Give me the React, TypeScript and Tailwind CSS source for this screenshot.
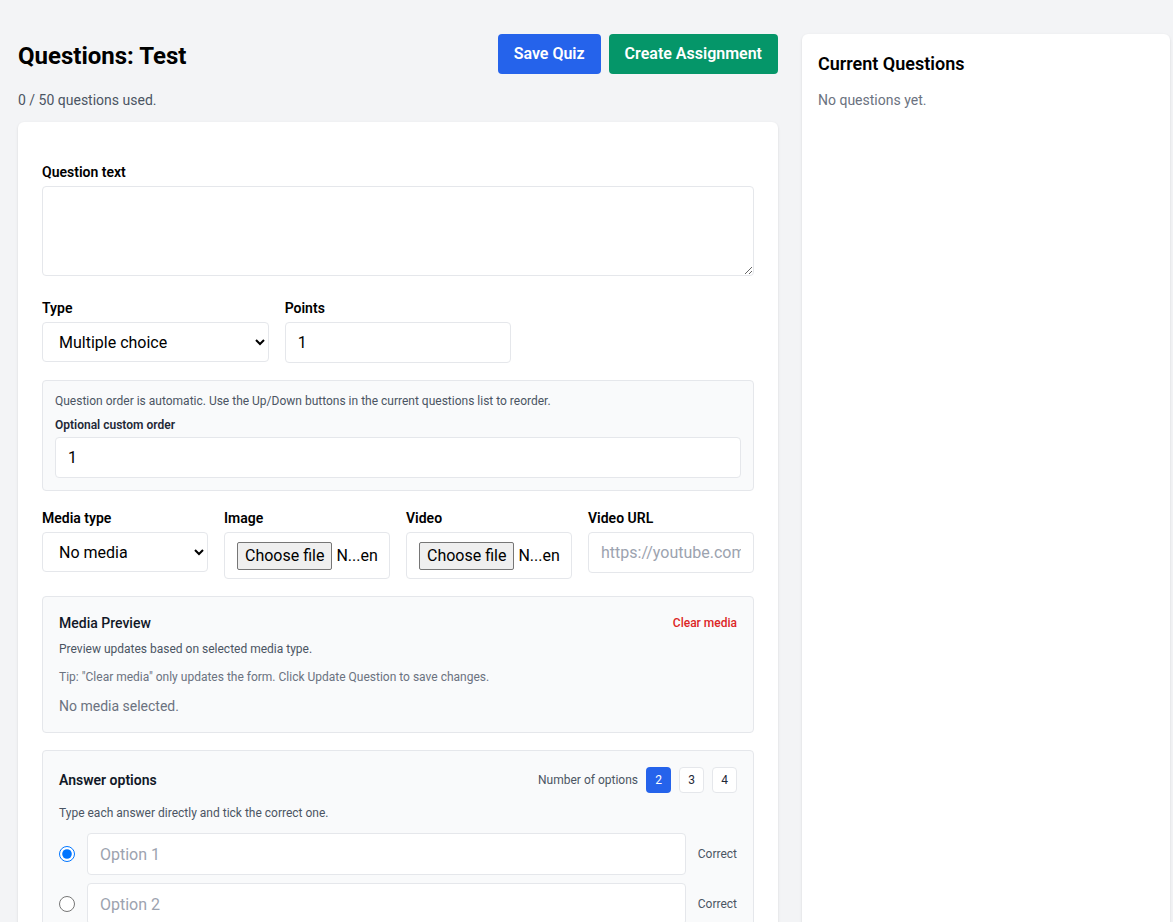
import { useState } from "react";

const font = { fontFamily: 'Roboto, "Noto Sans", sans-serif' };

function FilePicker({ accept }: { accept: string }) {
  const [name, setName] = useState("");
  return (
    <label className="flex items-center w-full h-[47px] border border-gray-200 rounded px-3 text-base bg-white cursor-pointer overflow-hidden whitespace-nowrap">
      <input
        type="file"
        accept={accept}
        className="hidden"
        onChange={(e) => setName(e.target.files?.[0]?.name ?? "")}
      />
      <span className="flex items-center h-[28px] px-[7px] border border-[#767676] bg-[#efefef] rounded-[2px] text-black">
        Choose file
      </span>
      <span className="ml-1 text-black">{name ? name : "N...en"}</span>
    </label>
  );
}

export default function App() {
  const [count, setCount] = useState(2);
  const [correct, setCorrect] = useState(0);

  return (
    <div className="min-h-screen bg-[#f3f4f6] text-black" style={font}>
      <div className="grid grid-cols-[760px_368px] gap-6 pl-[18px] pr-[3px] pt-[34px]">
        {/* Left column */}
        <div>
          <div className="flex items-center justify-between">
            <h1 className="text-2xl font-bold mt-[3px]">Questions: Test</h1>
            <div className="flex gap-2">
              <button className="h-10 px-4 rounded bg-[#2563eb] text-white font-semibold">Save Quiz</button>
              <button className="h-10 px-4 rounded bg-[#059669] text-white font-semibold">Create Assignment</button>
            </div>
          </div>
          <p className="mt-4 text-sm text-[#4b5563]">0 / 50 questions used.</p>

          <div className="mt-3 bg-white rounded-md shadow-sm px-6 pt-10 pb-6">
            {/* Question text */}
            <label className="block text-sm font-semibold mb-1">Question text</label>
            <textarea className="block w-full h-[90px] border border-gray-200 rounded px-3 py-2" />

            {/* Type / Points */}
            <div className="grid grid-cols-3 gap-4 mt-[22px]">
              <div>
                <label className="block text-sm font-semibold mb-1">Type</label>
                <select className="block w-full h-10 border border-gray-200 rounded px-3 bg-white text-base">
                  <option>Multiple choice</option>
                  <option>True / False</option>
                  <option>Short answer</option>
                </select>
              </div>
              <div>
                <label className="block text-sm font-semibold mb-1">Points</label>
                <input className="block w-full h-[41px] border border-gray-200 rounded px-3 text-base" defaultValue="1" />
              </div>
            </div>

            {/* Order */}
            <div className="mt-[17px] bg-[#f9fafb] border border-gray-200 rounded px-3 py-3">
              <p className="text-xs text-[#4b5563]">
                Question order is automatic. Use the Up/Down buttons in the current questions list to reorder.
              </p>
              <label className="block mt-2 text-xs font-semibold text-[#1f2937]">Optional custom order</label>
              <input className="block mt-1 w-full h-[41px] border border-gray-200 rounded px-3 bg-white text-base" defaultValue="1" />
            </div>

            {/* Media */}
            <div className="grid grid-cols-4 gap-4 mt-[17px]">
              <div>
                <label className="block text-sm font-semibold mb-1">Media type</label>
                <select className="block w-full h-10 border border-gray-200 rounded px-3 bg-white text-base">
                  <option>No media</option>
                  <option>Image</option>
                  <option>Video</option>
                </select>
              </div>
              <div>
                <label className="block text-sm font-semibold mb-1">Image</label>
                <FilePicker accept="image/*" />
              </div>
              <div>
                <label className="block text-sm font-semibold mb-1">Video</label>
                <FilePicker accept="video/*" />
              </div>
              <div>
                <label className="block text-sm font-semibold mb-1">Video URL</label>
                <input
                  className="block w-full h-[41px] border border-gray-200 rounded px-3 text-base placeholder:text-[#9ca3af]"
                  placeholder="https://youtube.com/..."
                />
              </div>
            </div>

            {/* Media preview */}
            <div className="mt-[17px] bg-[#f9fafb] border border-gray-200 rounded p-4">
              <div className="flex items-center justify-between">
                <h3 className="text-sm font-medium text-[#111827]">Media Preview</h3>
                <button className="text-xs font-medium text-[#dc2626]">Clear media</button>
              </div>
              <p className="mt-2 text-xs text-[#4b5563]">Preview updates based on selected media type.</p>
              <p className="mt-3 text-xs text-[#6b7280]">
                Tip: "Clear media" only updates the form. Click Update Question to save changes.
              </p>
              <p className="mt-[11px] text-sm text-[#6b7280]">No media selected.</p>
            </div>

            {/* Answer options */}
            <div className="mt-[17px] bg-[#f9fafb] border border-gray-200 rounded p-4">
              <div className="flex items-center justify-between">
                <h3 className="text-sm font-semibold text-[#111827]">Answer options</h3>
                <div className="flex items-center gap-2">
                  <span className="text-xs text-[#4b5563]">Number of options</span>
                  {[2, 3, 4].map((n) => (
                    <button
                      key={n}
                      onClick={() => setCount(n)}
                      className={
                        n === count
                          ? "w-[25px] h-[26px] rounded text-xs bg-[#2563eb] text-white"
                          : "w-[25px] h-[26px] rounded text-xs bg-white border border-gray-200 text-[#1f2937]"
                      }
                    >
                      {n}
                    </button>
                  ))}
                </div>
              </div>
              <p className="mt-3 text-xs text-[#4b5563]">Type each answer directly and tick the correct one.</p>
              <div className="mt-3 flex flex-col gap-2">
                {Array.from({ length: count }).map((_, i) => (
                  <div key={i} className="flex items-center gap-3">
                    <input
                      type="radio"
                      name="correct"
                      checked={correct === i}
                      onChange={() => setCorrect(i)}
                      className="w-4 h-4 m-0"
                    />
                    <input
                      className="flex-1 h-[42px] border border-gray-200 rounded px-3 bg-white text-base placeholder:text-[#9ca3af]"
                      placeholder={`Option ${i + 1}`}
                    />
                    <span className="text-xs text-[#4b5563]">Correct</span>
                  </div>
                ))}
              </div>
            </div>
          </div>
        </div>

        {/* Right column */}
        <div className="bg-white rounded-md shadow-sm p-4">
          <h2 className="text-lg font-semibold">Current Questions</h2>
          <p className="mt-3 text-sm text-[#6b7280]">No questions yet.</p>
        </div>
      </div>
    </div>
  );
}
